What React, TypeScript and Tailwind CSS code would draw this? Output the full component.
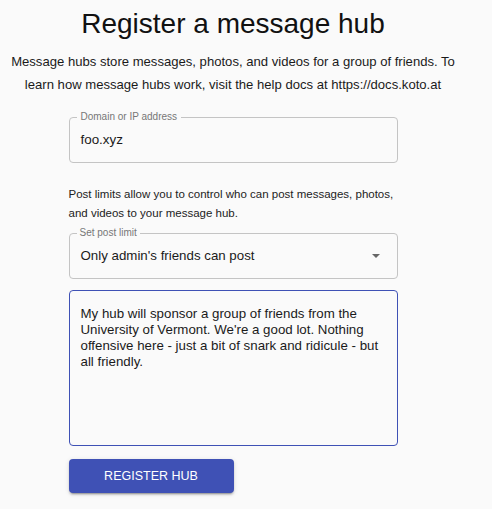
import React from "react";

export default function App() {
  return (
    <div className="min-h-screen w-full bg-[#fafafa]" style={{ fontFamily: '"Liberation Sans", Arial, sans-serif' }}>
      <div className="w-[466px] flex flex-col items-center">
        <h1 className="mt-[6px] text-[28px] leading-[36px] text-[#111]">Register a message hub</h1>
        <p className="mt-[8px] text-center text-[13.1px] leading-[23px] text-[#1a1a1a]">
          Message hubs store messages, photos, and videos for a group of friends. To learn how message hubs work, visit the help docs at https://docs.koto.at
        </p>
        <div className="w-[329px] flex flex-col mt-[21px]">
          <div className="relative h-[46px] rounded-[4px] border border-[#c4c4c4] flex items-center px-[11px]">
            <span className="absolute top-[-7px] left-[7px] px-[4px] bg-[#fafafa] text-[10px] leading-[12px] text-[#777]">Domain or IP address</span>
            <span className="text-[13.4px] text-[#1a1a1a]">foo.xyz</span>
          </div>
          <p className="mt-[22px] text-[11.5px] leading-[19px] text-[#222]">
            Post limits allow you to control who can post messages, photos, and videos to your message hub.
          </p>
          <div className="relative mt-[10px] h-[46px] rounded-[4px] border border-[#c4c4c4] flex items-center px-[11px]">
            <span className="absolute top-[-7px] left-[7px] px-[3px] bg-[#fafafa] text-[10px] leading-[12px] text-[#777]">Set post limit</span>
            <span className="text-[13.3px] text-[#1a1a1a] flex-1">Only admin's friends can post</span>
            <svg width="8" height="4" viewBox="0 0 8 4" className="mr-[6px]"><path d="M0 0 L8 0 L4 4 Z" fill="#666" /></svg>
          </div>
          <div className="mt-[11px] h-[156px] rounded-[4px] border-[1.5px] border-[#3f51b5] px-[11px] pt-[15px] text-[13.3px] leading-[16px] text-[#1a1a1a]">
            My hub will sponsor a group of friends from the University of Vermont. We're a good lot. Nothing offensive here - just a bit of snark and ridicule - but all friendly.
          </div>
          <button className="mt-[13px] w-[165px] h-[34px] rounded-[4px] bg-[#3f51b5] text-white text-[12.5px] shadow-[0_3px_1px_-2px_rgba(0,0,0,0.2),0_2px_2px_0_rgba(0,0,0,0.14),0_1px_5px_0_rgba(0,0,0,0.12)]">
            REGISTER HUB
          </button>
        </div>
      </div>
    </div>
  );
}
